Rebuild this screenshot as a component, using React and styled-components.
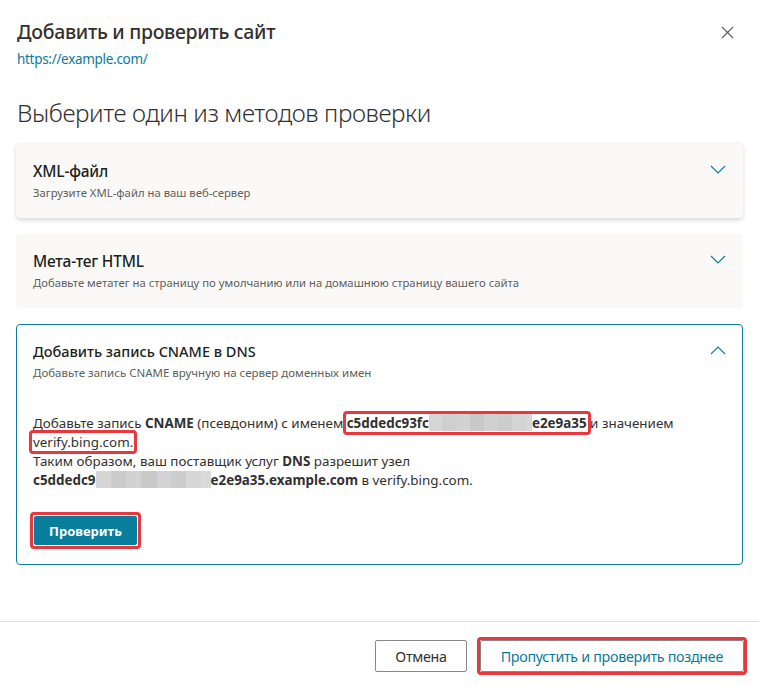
import React from 'react';
import styled, { createGlobalStyle } from 'styled-components';

const GlobalStyle = createGlobalStyle`
  html, body {
    margin: 0;
    padding: 0;
    background: #ffffff;
  }
  body {
    font-family: "Noto Sans", "Open Sans", sans-serif;
    color: #323130;
  }
`;

const teal = '#0b7b9b';
const mark = '#e8383d';

const Dialog = styled.div`
  width: 759px;
  height: 686px;
  display: flex;
  flex-direction: column;
  background: #fff;
  overflow: hidden;
`;

const Header = styled.div`
  display: flex;
  justify-content: space-between;
  align-items: flex-start;
  padding: 19px 24px 0 17px;
`;

const Title = styled.h1`
  margin: 0;
  font-size: 19.5px;
  font-weight: 500;
  letter-spacing: -0.3px;
  line-height: 26px;
  color: #323130;
`;

const Close = styled.button`
  border: 0;
  background: none;
  padding: 0;
  margin-top: 7px;
  width: 14px;
  height: 14px;
  display: flex;
  cursor: pointer;
`;

const Url = styled.a`
  display: block;
  margin: 6px 0 0 17px;
  font-size: 13.5px;
  letter-spacing: -0.3px;
  color: ${teal};
  text-decoration: none;
  line-height: 16px;
`;

const Heading = styled.h2`
  margin: 31px 0 0 17px;
  font-size: 24.3px;
  font-weight: 300;
  letter-spacing: -0.4px;
  line-height: 30px;
  color: #323130;
`;

const Methods = styled.div`
  display: flex;
  flex-direction: column;
  gap: 16px;
  margin: 16px 16px 0 16px;
`;

const Card = styled.div`
  border-radius: 4px;
  background: ${p => (p.$open ? '#fff' : '#faf9f8')};
  border: 1px solid ${p => (p.$open ? teal : 'transparent')};
  box-shadow: ${p => (p.$raised ? '0 1.5px 4px rgba(0,0,0,0.16)' : 'none')};
  padding: ${p => (p.$open ? '15px 16px 15px 16px' : '15px 16px 16px 16px')};
`;

const CardHead = styled.div`
  display: flex;
  justify-content: space-between;
  align-items: flex-start;
`;

const CardTitle = styled.div`
  font-size: ${p => (p.$wide ? '14.5px' : '15.5px')};
  font-weight: 500;
  letter-spacing: ${p => (p.$wide ? '0' : '-0.2px')};
  line-height: 22px;
  color: #201f1e;
`;

const CardSub = styled.div`
  margin-top: 3px;
  font-size: ${p => (p.$wide ? '11.5px' : '11.3px')};
  line-height: 16px;
  color: #605e5c;
`;

const Chevron = styled.span`
  display: flex;
  margin: 5px 0 0 0;
`;

const Body = styled.div`
  margin-top: 33px;
  font-size: 13.4px;
  line-height: 19px;
  color: #323130;
`;

const Mark = styled.span`
  border: 3px solid ${mark};
  border-radius: 4px;
  padding: 0 1px;
  margin: 0 -4px;
`;

const Blur = styled.span`
  display: inline-flex;
  vertical-align: -3px;
  height: 17px;
`;

const Tile = styled.span`
  display: inline-block;
  height: 17px;
  width: ${p => p.$w}px;
  background: ${p => p.$c};
`;

const MarkButton = styled.div`
  display: inline-flex;
  margin-top: 22px;
  margin-left: -3px;
  border: 3px solid ${mark};
  border-radius: 4px;
  padding: 1px;
`;

const Primary = styled.button`
  background: #087d9c;
  color: #fff;
  border: 0;
  border-radius: 2px;
  height: 29px;
  padding: 0 15px;
  font-family: "Noto Sans", sans-serif;
  font-size: 13px;
  font-weight: 700;
  cursor: pointer;
`;

const Footer = styled.div`
  margin-top: auto;
  border-top: 1px solid #e1dfdd;
  display: flex;
  justify-content: flex-end;
  align-items: center;
  gap: 10px;
  padding: 15px 12px 11px 0;
`;

const Secondary = styled.button`
  background: #fff;
  border: 1px solid #8a8886;
  border-radius: 2px;
  height: 32px;
  padding: 0 ${p => p.$pad || 20}px;
  font-family: "Noto Sans", sans-serif;
  font-size: 14.3px;
  letter-spacing: -0.3px;
  color: ${p => (p.$accent ? teal : '#323130')};
  cursor: pointer;
`;

const FooterMark = styled.div`
  display: flex;
  border: 3px solid ${mark};
  border-radius: 4px;
`;

function ChevronIcon({ up }) {
  return (
    <svg width="16" height="10" viewBox="0 0 16 10" fill="none">
      <path
        d={up ? 'M1 9 L8 2 L15 9' : 'M1 1 L8 8 L15 1'}
        stroke="#0b7b9b"
        strokeWidth="1.1"
      />
    </svg>
  );
}

function Redacted({ tiles }) {
  return (
    <Blur>
      {tiles.map((t, i) => (
        <Tile key={i} $w={t[0]} $c={t[1]} />
      ))}
    </Blur>
  );
}

const nameTiles = [
  [13, '#d6d6d6'], [14, '#cfcfcf'], [14, '#d2d2d2'], [14, '#c8c8c8'],
  [14, '#d0d0d0'], [14, '#cdcdcd'], [14, '#d4d4d4'], [6, '#d8d8d8'],
];

const hostTiles = [
  [15, '#d5d5d5'], [15, '#cbcbcb'], [15, '#d2d2d2'], [16, '#c9c9c9'],
  [14, '#d3d3d3'], [15, '#cdcdcd'], [15, '#d6d6d6'], [10, '#dadada'],
];

export default function App() {
  return (
    <>
      <GlobalStyle />
      <Dialog>
        <Header>
          <Title>Добавить и проверить сайт</Title>
          <Close aria-label="Закрыть">
            <svg width="13" height="13" viewBox="0 0 13 13">
              <path d="M1 1 L12 12 M12 1 L1 12" stroke="#605e5c" strokeWidth="1.1" />
            </svg>
          </Close>
        </Header>
        <Url href="#">https://example.com/</Url>
        <Heading>Выберите один из методов проверки</Heading>

        <Methods>
          <Card $raised>
            <CardHead>
              <div>
                <CardTitle>XML-файл</CardTitle>
                <CardSub>Загрузите XML-файл на ваш веб-сервер</CardSub>
              </div>
              <Chevron><ChevronIcon /></Chevron>
            </CardHead>
          </Card>

          <Card>
            <CardHead>
              <div>
                <CardTitle>Мета-тег HTML</CardTitle>
                <CardSub>Добавьте метатег на страницу по умолчанию или на домашнюю страницу вашего сайта</CardSub>
              </div>
              <Chevron><ChevronIcon /></Chevron>
            </CardHead>
          </Card>

          <Card $open>
            <CardHead>
              <div>
                <CardTitle $wide>Добавить запись CNAME в DNS</CardTitle>
                <CardSub $wide>Добавьте запись CNAME вручную на сервер доменных имен</CardSub>
              </div>
              <Chevron><ChevronIcon up /></Chevron>
            </CardHead>
            <Body>
              Добавьте запись <b>CNAME</b> (псевдоним) с именем{' '}
              <Mark>
                <b>c5ddedc93fc</b>
                <Redacted tiles={nameTiles} />
                <b>e2e9a35</b>
              </Mark>{' '}
              и значением
              <br />
              <Mark>verify.bing.com.</Mark>
              <br />
              Таким образом, ваш поставщик услуг <b>DNS</b> разрешит узел
              <br />
              <b>c5ddedc9</b>
              <Redacted tiles={hostTiles} />
              <b>e2e9a35.example.com</b> в verify.bing.com.
            </Body>
            <MarkButton>
              <Primary>Проверить</Primary>
            </MarkButton>
          </Card>
        </Methods>

        <Footer>
          <Secondary $pad={19}>Отмена</Secondary>
          <FooterMark>
            <Secondary $accent $pad={20}>Пропустить и проверить позднее</Secondary>
          </FooterMark>
        </Footer>
      </Dialog>
    </>
  );
}
